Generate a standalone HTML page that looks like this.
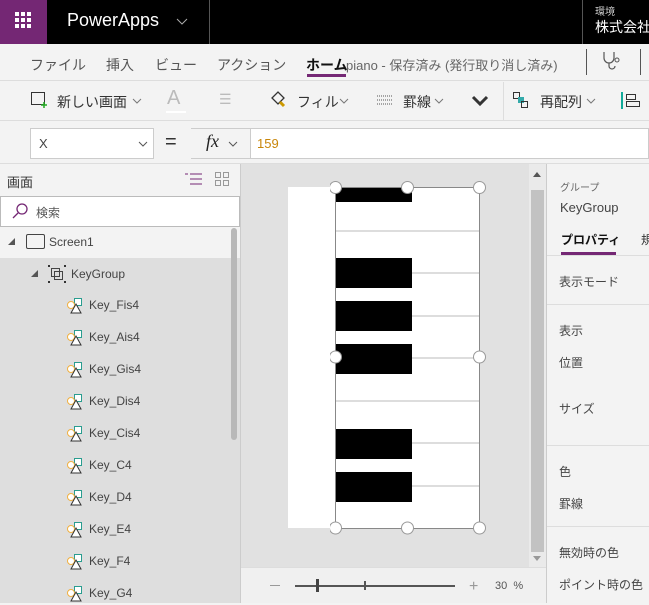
<!DOCTYPE html>
<html><head><meta charset="utf-8"><style>
*{margin:0;padding:0;box-sizing:border-box}
body{width:649px;height:603px;overflow:hidden;position:relative;background:#f3f3f3;font-family:"Liberation Sans","Noto Sans CJK JP",sans-serif;color:#333}
.a{position:absolute;white-space:nowrap}
</style></head><body>
<!-- top bar -->
<div class="a" style="left:0;top:0;width:649px;height:44px;background:#000"></div>
<div class="a" style="left:0;top:0;width:47px;height:44px;background:#742774"></div>
<svg class="a" style="left:15px;top:12px" width="18" height="18"><g fill="#fff"><rect x="0" y="0" width="4" height="4"/><rect x="6" y="0" width="4" height="4"/><rect x="12" y="0" width="4" height="4"/><rect x="0" y="6" width="4" height="4"/><rect x="6" y="6" width="4" height="4"/><rect x="12" y="6" width="4" height="4"/><rect x="0" y="12" width="4" height="4"/><rect x="6" y="12" width="4" height="4"/><rect x="12" y="12" width="4" height="4"/></g></svg>
<div class="a" style="left:67px;top:10px;color:#fff;font-size:18px">PowerApps</div>
<svg class="a" style="left:176px;top:18px" width="12" height="8"><path d="M1 1l5 5 5-5" stroke="#aaa" fill="none"/></svg>
<div class="a" style="left:209px;top:0;width:1px;height:44px;background:#555"></div>
<div class="a" style="left:582px;top:0;width:1px;height:44px;background:#555"></div>
<div class="a" style="left:595px;top:3px;color:#ccc;font-size:10px">環境</div>
<div class="a" style="left:595px;top:17px;color:#fff;font-size:14px">株式会社</div>
<!-- menu -->
<div class="a" style="left:30px;top:55px;font-size:14px;color:#555">ファイル</div>
<div class="a" style="left:106px;top:55px;font-size:14px;color:#555">挿入</div>
<div class="a" style="left:155px;top:55px;font-size:14px;color:#555">ビュー</div>
<div class="a" style="left:217px;top:55px;font-size:14px;color:#555">アクション</div>
<div class="a" style="left:306px;top:55px;font-size:14px;color:#111;font-weight:bold">ホーム</div>
<div class="a" style="left:307px;top:74px;width:39px;height:3px;background:#742774"></div>
<div class="a" style="left:346px;top:55px;font-size:13px;color:#666">piano - 保存済み (発行取り消し済み)</div>
<div class="a" style="left:586px;top:49px;width:1px;height:26px;background:#555"></div>
<svg class="a" style="left:601px;top:50px" width="22" height="22"><path d="M3 2v6a5 5 0 0 0 10 0V2M8 13v3a3 3 0 0 0 6 0" stroke="#555" fill="none" stroke-width="1.2"/><circle cx="16" cy="10" r="2" stroke="#555" fill="none"/></svg>
<div class="a" style="left:640px;top:49px;width:1px;height:26px;background:#555"></div>
<div class="a" style="left:0;top:80px;width:649px;height:1px;background:#ddd"></div>
<!-- toolbar -->
<svg class="a" style="left:31px;top:92px" width="16" height="16"><rect x="0.5" y="0.5" width="13" height="12" stroke="#333" fill="none"/><path d="M13 10v6M10 13h6" stroke="#2a2" stroke-width="1.5"/></svg>
<div class="a" style="left:57px;top:92px;font-size:14px;color:#333">新しい画面</div>
<svg class="a" style="left:132px;top:98px" width="10" height="6"><path d="M1 1l4 4 4-4" stroke="#777" fill="none"/></svg>
<div class="a" style="left:167px;top:87px;font-size:20px;color:#bbb">A</div>
<div class="a" style="left:166px;top:111px;width:20px;height:2px;background:#fff"></div>
<div class="a" style="left:219px;top:91px;font-size:14px;color:#bbb">☰</div>
<svg class="a" style="left:270px;top:90px" width="16" height="18"><path d="M2 8l6-6 6 6-6 6z" stroke="#333" fill="none" stroke-width="1.3"/><path d="M10 12l4 4" stroke="#c90" stroke-width="3"/></svg>
<div class="a" style="left:297px;top:92px;font-size:14px;color:#333">フィル</div>
<svg class="a" style="left:339px;top:98px" width="10" height="6"><path d="M1 1l4 4 4-4" stroke="#777" fill="none"/></svg>
<svg class="a" style="left:377px;top:95px" width="16" height="10"><path d="M0 1h16M0 5h16M0 9h16" stroke="#555" stroke-dasharray="1 1"/></svg>
<div class="a" style="left:403px;top:92px;font-size:14px;color:#333">罫線</div>
<svg class="a" style="left:434px;top:98px" width="10" height="6"><path d="M1 1l4 4 4-4" stroke="#777" fill="none"/></svg>
<svg class="a" style="left:471px;top:95px" width="18" height="12"><path d="M2 2l7 7 7-7" stroke="#333" fill="none" stroke-width="3"/></svg>
<div class="a" style="left:503px;top:82px;width:1px;height:38px;background:#ddd"></div>
<svg class="a" style="left:513px;top:92px" width="16" height="18"><rect x="0.5" y="0.5" width="6" height="6" stroke="#333" fill="none"/><rect x="5" y="5" width="6" height="6" fill="#3aa"/><rect x="8.5" y="9.5" width="6" height="6" stroke="#333" fill="none"/></svg>
<div class="a" style="left:540px;top:92px;font-size:14px;color:#333">再配列</div>
<svg class="a" style="left:586px;top:98px" width="10" height="6"><path d="M1 1l4 4 4-4" stroke="#777" fill="none"/></svg>
<div class="a" style="left:621px;top:92px;width:2px;height:17px;background:#1a9"></div>
<svg class="a" style="left:626px;top:94px" width="16" height="14"><rect x="0.5" y="0.5" width="9" height="5" stroke="#333" fill="none"/><rect x="0.5" y="7.5" width="13" height="5" stroke="#333" fill="none"/></svg>
<div class="a" style="left:0;top:120px;width:649px;height:1px;background:#ddd"></div>
<!-- formula bar -->
<div class="a" style="left:30px;top:128px;width:124px;height:31px;background:#fff;border:1px solid #ccc"></div>
<div class="a" style="left:39px;top:136px;font-size:13px;color:#444">X</div>
<svg class="a" style="left:138px;top:141px" width="10" height="6"><path d="M1 1l4 4 4-4" stroke="#555" fill="none"/></svg>
<div class="a" style="left:165px;top:131px;font-size:20px;color:#333">=</div>
<div class="a" style="left:191px;top:128px;width:458px;height:31px;background:#fff;border:1px solid #ccc"></div>
<div class="a" style="left:191px;top:129px;width:60px;height:29px;background:#f3f3f3;border-right:1px solid #ccc"></div>
<div class="a" style="left:206px;top:131px;font-size:18px;font-style:italic;font-family:'Liberation Serif',serif;color:#222">fx</div>
<svg class="a" style="left:228px;top:141px" width="10" height="6"><path d="M1 1l4 4 4-4" stroke="#555" fill="none"/></svg>
<div class="a" style="left:257px;top:136px;font-size:13px;color:#c8860a">159</div>
<div class="a" style="left:0;top:163px;width:649px;height:1px;background:#ddd"></div>
<!-- left panel -->
<div class="a" style="left:0;top:164px;width:240px;height:439px;background:#dedede"></div>
<div class="a" style="left:0;top:164px;width:240px;height:94px;background:#f3f3f3"></div>
<div class="a" style="left:7px;top:172px;font-size:13px;color:#333">画面</div>
<svg class="a" style="left:185px;top:173px" width="18" height="13"><path d="M5 1h12M5 6h12M5 11h12" stroke="#742774"/><path d="M0 1h3" stroke="#742774"/></svg>
<svg class="a" style="left:215px;top:172px" width="14" height="14"><g stroke="#999" fill="none"><rect x="0.5" y="0.5" width="5" height="5"/><rect x="8.5" y="0.5" width="5" height="5"/><rect x="0.5" y="8.5" width="5" height="5"/><rect x="8.5" y="8.5" width="5" height="5"/></g></svg>
<div class="a" style="left:0;top:196px;width:240px;height:31px;background:#fff;border:1px solid #bbb"></div>
<svg class="a" style="left:11px;top:202px" width="18" height="18"><circle cx="11" cy="7" r="5" stroke="#742774" fill="none" stroke-width="1.3"/><path d="M7 11l-5 5" stroke="#742774" stroke-width="1.3"/></svg>
<div class="a" style="left:36px;top:204px;font-size:12px;color:#555">検索</div>
<svg class="a" style="left:8px;top:238px" width="8" height="8"><path d="M7 0v7H0z" fill="#555"/></svg>
<div class="a" style="left:26px;top:234px;width:19px;height:15px;border:1px solid #444;border-radius:2px"></div>
<div class="a" style="left:49px;top:235px;font-size:12px;color:#444">Screen1</div>
<svg class="a" style="left:31px;top:270px" width="8" height="8"><path d="M7 0v7H0z" fill="#555"/></svg>
<svg class="a" style="left:48px;top:265px" width="18" height="18"><g fill="#333"><rect x="0" y="0" width="2" height="2"/><rect x="16" y="0" width="2" height="2"/><rect x="0" y="16" width="2" height="2"/><rect x="16" y="16" width="2" height="2"/></g><rect x="3.5" y="3.5" width="8" height="8" stroke="#444" fill="none"/><rect x="6.5" y="6.5" width="8" height="8" stroke="#444" fill="none"/></svg>
<div class="a" style="left:71px;top:267px;font-size:12px;color:#444">KeyGroup</div>
<div id="rows"></div>
<div class="a" style="left:231px;top:228px;width:6px;height:212px;background:#b8b8b8;border-radius:3px"></div>
<div class="a" style="left:240px;top:164px;width:1px;height:439px;background:#ccc"></div>
<!-- canvas -->
<div class="a" style="left:241px;top:164px;width:288px;height:403px;background:#e1e1e1"></div>
<div class="a" style="left:529px;top:164px;width:17px;height:403px;background:#eaeaea"></div>
<div class="a" style="left:531px;top:190px;width:13px;height:362px;background:#c2c2c2"></div>
<svg class="a" style="left:533px;top:172px" width="8" height="6"><path d="M0 5h8L4 0z" fill="#555"/></svg>
<svg class="a" style="left:533px;top:556px" width="8" height="6"><path d="M0 0h8L4 5z" fill="#999"/></svg>
<div class="a" style="left:288px;top:187px;width:192px;height:341px;background:#fff"></div>
<svg class="a" style="left:330px;top:180px" width="156" height="356">
<g stroke="#bbb" stroke-width="1"><path d="M5 51h145M82 93h68M5 136h145M82 178h68M5 221h145M82 263h68M82 306h68"/></g>
<g fill="#000"><rect x="5" y="7" width="77" height="15"/><rect x="5" y="78" width="77" height="30"/><rect x="5" y="121" width="77" height="30"/><rect x="5" y="164" width="77" height="30"/><rect x="5" y="249" width="77" height="30"/><rect x="5" y="292" width="77" height="30"/></g>
<rect x="5.5" y="7.5" width="144" height="341" stroke="#888" fill="none"/>
<g fill="#fff" stroke="#999"><circle cx="5.5" cy="7.5" r="6"/><circle cx="77.5" cy="7.5" r="6"/><circle cx="149.5" cy="7.5" r="6"/><circle cx="5.5" cy="177" r="6"/><circle cx="149.5" cy="177" r="6"/><circle cx="5.5" cy="348" r="6"/><circle cx="77.5" cy="348" r="6"/><circle cx="149.5" cy="348" r="6"/></g>
</svg>
<div class="a" style="left:241px;top:567px;width:305px;height:36px;background:#f0f0f0;border-top:1px solid #ddd"></div>
<div class="a" style="left:270px;top:585px;width:10px;height:1px;background:#999"></div>
<div class="a" style="left:295px;top:585px;width:160px;height:2px;background:#555"></div>
<div class="a" style="left:316px;top:579px;width:3px;height:13px;background:#444"></div>
<div class="a" style="left:364px;top:581px;width:2px;height:9px;background:#555"></div>
<div class="a" style="left:469px;top:578px;font-size:16px;color:#999">+</div>
<div class="a" style="left:495px;top:580px;font-size:11px;color:#555">30 &nbsp;%</div>
<!-- right panel -->
<div class="a" style="left:546px;top:164px;width:1px;height:439px;background:#ccc"></div>
<div class="a" style="left:547px;top:164px;width:102px;height:439px;background:#f3f3f3"></div>
<div class="a" style="left:560px;top:179px;font-size:10px;color:#666">グループ</div>
<div class="a" style="left:560px;top:200px;font-size:13px;color:#444">KeyGroup</div>
<div class="a" style="left:561px;top:231px;font-size:12px;color:#111;font-weight:bold">プロパティ</div>
<div class="a" style="left:641px;top:231px;font-size:12px;color:#333">規</div>
<div class="a" style="left:561px;top:252px;width:55px;height:3px;background:#742774"></div>
<div class="a" style="left:547px;top:255px;width:102px;height:1px;background:#ddd"></div>
<div class="a" style="left:559px;top:273px;font-size:12px;color:#444">表示モード</div>
<div class="a" style="left:547px;top:304px;width:102px;height:1px;background:#ddd"></div>
<div class="a" style="left:559px;top:322px;font-size:12px;color:#444">表示</div>
<div class="a" style="left:559px;top:354px;font-size:12px;color:#444">位置</div>
<div class="a" style="left:559px;top:400px;font-size:12px;color:#444">サイズ</div>
<div class="a" style="left:547px;top:445px;width:102px;height:1px;background:#ddd"></div>
<div class="a" style="left:559px;top:463px;font-size:12px;color:#444">色</div>
<div class="a" style="left:559px;top:495px;font-size:12px;color:#444">罫線</div>
<div class="a" style="left:547px;top:526px;width:102px;height:1px;background:#ddd"></div>
<div class="a" style="left:559px;top:544px;font-size:12px;color:#444">無効時の色</div>
<div class="a" style="left:559px;top:576px;font-size:12px;color:#444">ポイント時の色</div>
<script>
var n=["Key_Fis4","Key_Ais4","Key_Gis4","Key_Dis4","Key_Cis4","Key_C4","Key_D4","Key_E4","Key_F4","Key_G4"],h="";
n.forEach(function(t,i){var y=306+i*32;
h+='<svg class="a" style="left:66px;top:'+(y-9)+'px" width="20" height="20"><rect x="8.5" y="1.5" width="7" height="7" stroke="#2a9d8f" fill="#fff"/><circle cx="5" cy="8" r="3.5" stroke="#f0b040" fill="#fff"/><path d="M5 16L10 7l5 9z" stroke="#333" fill="#fff"/></svg>';
h+='<div class="a" style="left:89px;top:'+(y-8)+'px;font-size:12px;color:#444">'+t+'</div>';});
document.getElementById("rows").outerHTML=h;
</script>
</body></html>
